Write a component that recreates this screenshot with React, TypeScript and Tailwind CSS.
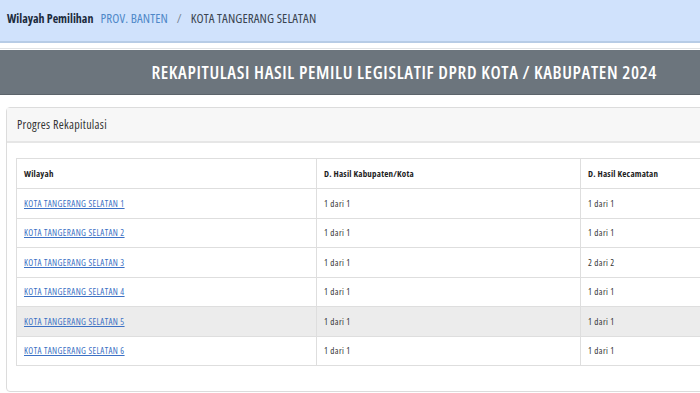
const rows = [
    { name: 'KOTA TANGERANG SELATAN 1', kab: '1 dari 1', kec: '1 dari 1' },
    { name: 'KOTA TANGERANG SELATAN 2', kab: '1 dari 1', kec: '1 dari 1' },
    { name: 'KOTA TANGERANG SELATAN 3', kab: '1 dari 1', kec: '2 dari 2' },
    { name: 'KOTA TANGERANG SELATAN 4', kab: '1 dari 1', kec: '1 dari 1' },
    { name: 'KOTA TANGERANG SELATAN 5', kab: '1 dari 1', kec: '1 dari 1' },
    { name: 'KOTA TANGERANG SELATAN 6', kab: '1 dari 1', kec: '1 dari 1' },
];

export default function App() {
    return (
        <div className="w-[700px] h-[393px] overflow-hidden bg-white font-['Open_Sans',sans-serif] font-stretch-condensed">
            {/* breadcrumb */}
            <div className="h-[43px] bg-[#d0e2fc] border-b-2 border-[#b7cce6] flex items-center pl-[7px] pb-[4px] text-[13px] tracking-[0.1px] whitespace-nowrap">
                <span className="font-bold text-[12px] tracking-normal text-[#1c2b3c]">Wilayah Pemilihan</span>
                <span className="ml-[7px] text-[#4f88c8]">PROV. BANTEN</span>
                <span className="mx-[9px] text-[#7a8794]">/</span>
                <span className="text-[#3a4450]">KOTA TANGERANG SELATAN</span>
            </div>

            <div className="mt-[5px] border-t border-[#e1e3e5] pt-px">
                <div className="h-[45px] bg-[#6c757d] border-b border-[#5c646b] flex items-center justify-end pr-[43px]">
                    <h1 className="text-[18px] font-semibold tracking-[0.65px] text-white whitespace-nowrap">REKAPITULASI HASIL PEMILU LEGISLATIF DPRD KOTA / KABUPATEN 2024</h1>
                </div>
            </div>

            {/* card */}
            <div className="mt-[12px] ml-[6px] w-[760px] border border-[#dcdcdc] rounded-[4px]">
                <div className="h-[35px] bg-[#f7f7f7] border-b-2 border-[#e6e6e6] flex items-center pl-[10px] text-[12px] tracking-[0.3px] text-[#333]">Progres Rekapitulasi</div>
                <div className="pt-[15px] pl-[9px] pb-[25px]">
                    <table className="table-fixed border-collapse w-[830px] text-[9px] tracking-[0.4px] text-[#333]">
                        <colgroup>
                            <col className="w-[300px]" />
                            <col className="w-[264px]" />
                            <col className="w-[266px]" />
                        </colgroup>
                        <thead>
                            <tr className="h-[30px]">
                                <th className="border border-[#dedede] px-[7px] text-left font-bold tracking-[0.2px] text-[#1e1e1e]">Wilayah</th>
                                <th className="border border-[#dedede] px-[7px] text-left font-bold tracking-[0.2px] text-[#1e1e1e]">D. Hasil Kabupaten/Kota</th>
                                <th className="border border-[#dedede] px-[7px] text-left font-bold tracking-[0.2px] text-[#1e1e1e]">D. Hasil Kecamatan</th>
                            </tr>
                        </thead>
                        <tbody>
                            {rows.map((row, i) => (
                                <tr key={i} className={i === 4 ? 'h-[29.5px] bg-[#ececec]' : 'h-[29.5px]'}>
                                    <td className="border border-[#dedede] px-[7px]">
                                        <a href="#" className="text-[#3b70c4] underline">
                                            {row.name}
                                        </a>
                                    </td>
                                    <td className="border border-[#dedede] px-[7px]">{row.kab}</td>
                                    <td className="border border-[#dedede] px-[7px]">{row.kec}</td>
                                </tr>
                            ))}
                        </tbody>
                    </table>
                </div>
            </div>
        </div>
    );
}
